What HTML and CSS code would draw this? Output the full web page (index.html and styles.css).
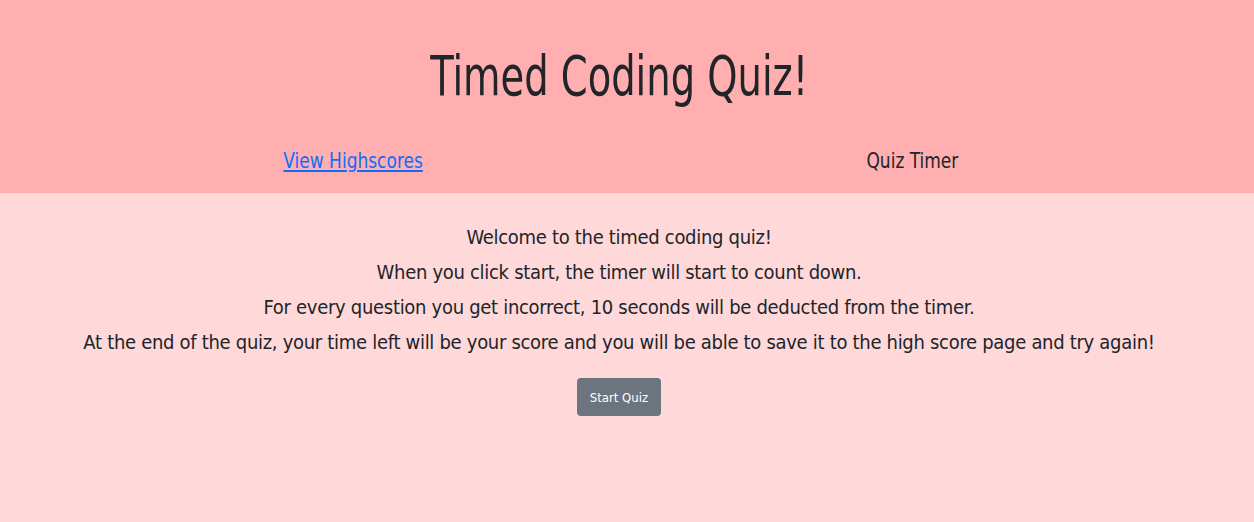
FILE: index.html
```
<!DOCTYPE html>
<html lang="en">
<head>
<meta charset="utf-8">
<title>Timed Coding Quiz</title>
<link rel="stylesheet" href="styles.css">
</head>
<body>
<header class="header">
  <h1 class="title"><span class="title-text">Timed Coding Quiz!</span></h1>
  <nav class="nav">
    <div class="nav-col nav-left"><a class="nav-link" href="#">View Highscores</a></div>
    <div class="nav-col nav-right"><span class="timer">Quiz Timer</span></div>
  </nav>
</header>
<main class="main">
  <p class="intro">Welcome to the timed coding quiz!</p>
  <p class="intro">When you click start, the timer will start to count down.</p>
  <p class="intro">For every question you get incorrect, 10 seconds will be deducted from the timer.</p>
  <p class="intro">At the end of the quiz, your time left will be your score and you will be able to save it to the high score page and try again!</p>
  <button class="start-btn" type="button">Start Quiz</button>
</main>
</body>
</html>
```
FILE: styles.css
```
* { box-sizing: border-box; }
html, body { margin: 0; padding: 0; }
body {
  background: #ffd9d9;
  color: #212529;
  font-family: "DejaVu Sans Condensed", "Liberation Sans Narrow", "Liberation Sans", sans-serif;
  height: 522px;
}
.header {
  background: #ffafaf;
  height: 193px;
  display: flex;
  flex-direction: column;
  align-items: center;
  padding: 40px 15px 0 0;
}
.title {
  margin: 0;
  font-weight: 400;
  font-size: 55px;
  line-height: 72px;
}
.title-text {
  display: inline-block;
  transform: scaleX(0.777);
}
.nav {
  display: flex;
  width: 100%;
  margin-top: 34px;
}
.nav-col {
  flex: 0 0 50%;
  display: flex;
  justify-content: center;
  font-size: 22px;
  line-height: 30px;
}
.nav-left { padding-left: 87px; }
.nav-right { padding-right: 34px; }
.nav-link, .timer {
  display: inline-block;
  transform: scaleX(0.86);
}
.nav-link { color: #0d6efd; text-decoration: underline; }
.timer { color: #212529; }
.main {
  display: flex;
  flex-direction: column;
  align-items: center;
  padding: 27px 16px 0 0;
}
.intro {
  margin: 0;
  font-size: 20px;
  line-height: 35px;
  letter-spacing: -0.3px;
  text-align: center;
}
.start-btn {
  margin-top: 18px;
  width: 84px;
  height: 38px;
  background: #6c757d;
  color: #ffffff;
  border: 0;
  border-radius: 4px;
  font-family: inherit;
  font-size: 13px;
}
```
